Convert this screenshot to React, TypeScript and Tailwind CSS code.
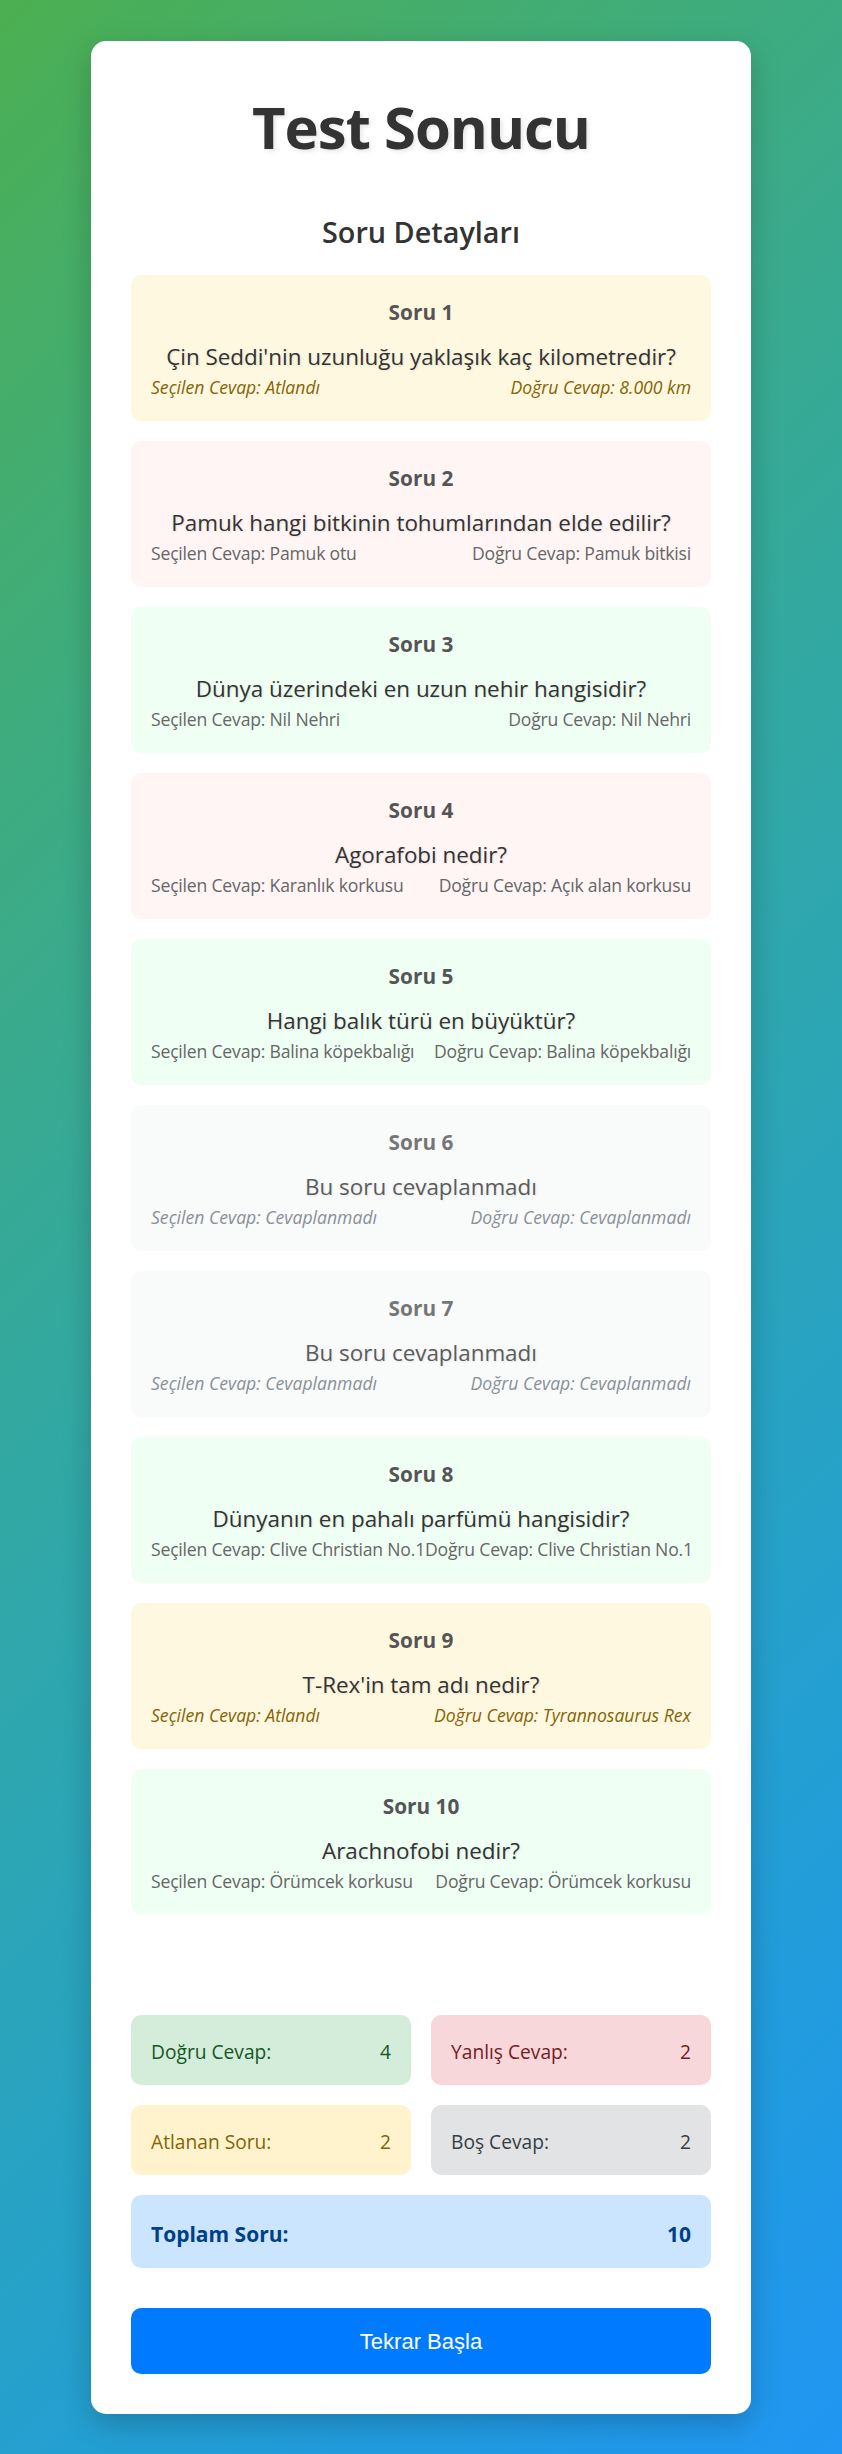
import React from 'react';

type Status = 'correct' | 'wrong' | 'skipped' | 'empty';

interface Item {
  question: string;
  selected: string;
  correct: string;
  status: Status;
}

const items: Item[] = [
  { question: "Çin Seddi'nin uzunluğu yaklaşık kaç kilometredir?", selected: 'Atlandı', correct: '8.000 km', status: 'skipped' },
  { question: 'Pamuk hangi bitkinin tohumlarından elde edilir?', selected: 'Pamuk otu', correct: 'Pamuk bitkisi', status: 'wrong' },
  { question: 'Dünya üzerindeki en uzun nehir hangisidir?', selected: 'Nil Nehri', correct: 'Nil Nehri', status: 'correct' },
  { question: 'Agorafobi nedir?', selected: 'Karanlık korkusu', correct: 'Açık alan korkusu', status: 'wrong' },
  { question: 'Hangi balık türü en büyüktür?', selected: 'Balina köpekbalığı', correct: 'Balina köpekbalığı', status: 'correct' },
  { question: 'Bu soru cevaplanmadı', selected: 'Cevaplanmadı', correct: 'Cevaplanmadı', status: 'empty' },
  { question: 'Bu soru cevaplanmadı', selected: 'Cevaplanmadı', correct: 'Cevaplanmadı', status: 'empty' },
  { question: 'Dünyanın en pahalı parfümü hangisidir?', selected: 'Clive Christian No.1', correct: 'Clive Christian No.1', status: 'correct' },
  { question: "T-Rex'in tam adı nedir?", selected: 'Atlandı', correct: 'Tyrannosaurus Rex', status: 'skipped' },
  { question: 'Arachnofobi nedir?', selected: 'Örümcek korkusu', correct: 'Örümcek korkusu', status: 'correct' },
];

const cardBg: Record<Status, string> = {
  correct: 'bg-[#f0fff4]',
  wrong: 'bg-[#fff5f5]',
  skipped: 'bg-[#fff8e1]',
  empty: 'bg-[#f8f9fa] opacity-80',
};

// italic rows are a little narrower in Open Sans, so only the upright ones get tightened
const answerText: Record<Status, string> = {
  correct: 'text-[#666] tracking-[-0.2px]',
  wrong: 'text-[#666] tracking-[-0.2px]',
  skipped: 'text-[#856404] italic',
  empty: 'text-[#6c757d] italic',
};

function QuestionCard({ item, index }: { item: Item; index: number }) {
  return (
    <div className={`rounded-[10px] px-5 pt-5 pb-[22px] text-center ${cardBg[item.status]}`}>
      <h3 className="mt-[3px] text-[20.8px] leading-[28px] font-bold text-[#555]">Soru {index + 1}</h3>
      <p className="mt-4 text-[22.4px] leading-[30px] text-[#333] [text-shadow:1px_1px_2px_rgba(0,0,0,0.1)]">
        {item.question}
      </p>
      <div className={`mt-[3px] flex justify-between text-[17.6px] leading-[24px] ${answerText[item.status]}`}>
        <span className="whitespace-nowrap">Seçilen Cevap: {item.selected}</span>
        <span className="whitespace-nowrap">Doğru Cevap: {item.correct}</span>
      </div>
    </div>
  );
}

function Stat({ label, value, className }: { label: string; value: number; className: string }) {
  return (
    <div className={`flex h-[70px] items-center justify-between rounded-[10px] px-5 pt-1 text-[19.2px] leading-[24px] ${className}`}>
      <span>{label}</span>
      <span>{value}</span>
    </div>
  );
}

export default function App() {
  return (
    <div className="min-h-screen bg-linear-135 from-[#4CAF50] to-[#2196F3] py-[41px] font-['Open_Sans',sans-serif]">
      <div className="mx-auto max-w-[660px] rounded-[15px] bg-white p-10 shadow-[0_10px_30px_rgba(0,0,0,0.2)]">
        <h1 className="mt-[10px] text-center text-[58px] leading-[72px] font-bold tracking-[-1px] text-[#333] [text-shadow:2px_2px_4px_rgba(0,0,0,0.1)]">
          Test Sonucu
        </h1>

        <h2 className="mt-[51px] text-center text-[28.8px] leading-[36px] font-semibold text-[#333]">Soru Detayları</h2>

        <div className="mt-[25px] flex flex-col gap-5">
          {items.map((item, i) => (
            <QuestionCard key={i} item={item} index={i} />
          ))}
        </div>

        <div className="mt-[100px] grid grid-cols-2 gap-5">
          <Stat label="Doğru Cevap:" value={4} className="bg-[#d4edda] text-[#155724]" />
          <Stat label="Yanlış Cevap:" value={2} className="bg-[#f8d7da] text-[#721c24]" />
          <Stat label="Atlanan Soru:" value={2} className="bg-[#fff3cd] text-[#856404]" />
          <Stat label="Boş Cevap:" value={2} className="bg-[#e2e3e5] text-[#383d41]" />
        </div>

        <div className="mt-5 flex h-[73px] items-center justify-between rounded-[10px] bg-[#cce5ff] px-5 pt-1 text-[21px] leading-[28px] font-bold text-[#004085]">
          <span>Toplam Soru:</span>
          <span>10</span>
        </div>

        <button className="mt-10 flex h-[66px] w-full items-center justify-center rounded-[10px] bg-[#007bff] font-['Liberation_Sans',Arial,sans-serif] text-[22px] text-white">
          Tekrar Başla
        </button>
      </div>
    </div>
  );
}
